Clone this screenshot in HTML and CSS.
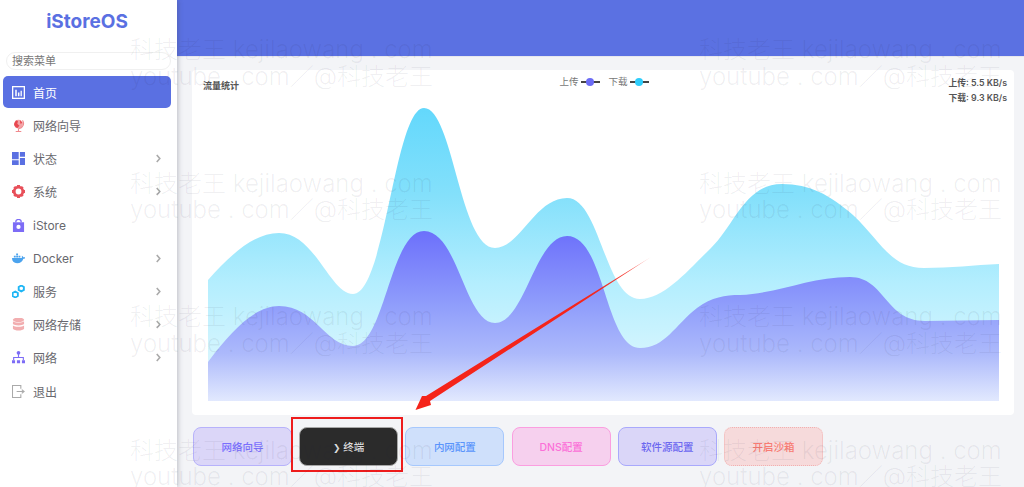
FILE: index.html
```html
<!DOCTYPE html>
<html lang="en">
<head>
    <meta charset="UTF-8" />
    <meta name="viewport" content="width=device-width, initial-scale=1.0" />
    <title>iStoreOS</title>
    <link rel="stylesheet" href="styles.css">
</head>
<body>
    <div class="app">
        <aside class="sidebar">
            <div class="logo">iStoreOS</div>
            <div class="search-box">搜索菜单</div>
            <nav class="menu">
                <a class="menu-item active">
                    <svg class="icon" viewBox="1 1 14 14"><rect x="1.700" y="1.700" width="12.600" height="12.600" fill="none" stroke="#fff" stroke-width="1.400"/><path d="M4.500 5v7h1.600V5zM7.400 8v4H9V8zM10.200 6v6h1.400V6z" fill="#fff"/></svg>
                    <span>首页</span>
                </a>
                <a class="menu-item">
                    <svg class="icon" viewBox="1 1 14 14"><circle cx="8" cy="6.500" r="4.800" fill="#f3a3a6"/><path d="M5 3c2-1 3 .5 2 2s1 2 2 3l-2 2.800c-2-.5-3.800-2.300-3.800-4.300zM9.500 2l2.800 3.200-2.300 1z" fill="#e8474f"/><path d="M12.300 2.500c2.500 3.500.5 8.500-4.300 9V14M5 14.500h6" fill="none" stroke="#f08a8e" stroke-width="1.200"/></svg>
                    <span>网络向导</span>
                </a>
                <a class="menu-item">
                    <svg class="icon" viewBox="1 1 14 14"><path d="M1 1h7.200v7.800H1zM9.500 1H15v5.200H9.500zM1 10h7.200v5H1zM9.500 7.500H15V15H9.500z" fill="#5a70e2"/></svg>
                    <span>状态</span>
                    <svg class="chevron" viewBox="0 0 8 10"><path d="M2 1l3.500 4L2 9" fill="none" stroke="#aaa" stroke-width="1.800"/></svg>
                </a>
                <a class="menu-item">
                    <svg class="icon" viewBox="1 1 14 14"><circle cx="8" cy="8" r="4.600" fill="none" stroke="#e8505a" stroke-width="3"/><path d="M6.500 1h3l.5 2.500h-4zM6.500 15h3l.5-2.500h-4zM1 6.500v3l2.500.5v-4zM15 6.500v3l-2.500.5v-4zM2.500 3.800l2-1.800 1.500 2-2 1.800zM13.500 3.800l-2-1.800-1.500 2 2 1.800zM2.500 12.200l2 1.800 1.500-2-2-1.800zM13.500 12.200l-2 1.800-1.500-2 2-1.800z" fill="#e8505a"/></svg>
                    <span>系统</span>
                    <svg class="chevron" viewBox="0 0 8 10"><path d="M2 1l3.500 4L2 9" fill="none" stroke="#aaa" stroke-width="1.800"/></svg>
                </a>
                <a class="menu-item">
                    <svg class="icon" viewBox="1 1 14 14"><path d="M2 4.500h12V15H2z" fill="#7d6cf6"/><path d="M5 4.500C5 .5 11 .5 11 4.500" fill="none" stroke="#7d6cf6" stroke-width="1.400"/><circle cx="8" cy="9.500" r="2.300" fill="#fff"/></svg>
                    <span>iStore</span>
                </a>
                <a class="menu-item">
                    <svg class="icon" viewBox="1 1 14 14"><path d="M1 7.500h10.500c.3-1.200.1-2 0-2.500 1 .3 1.500 1 1.600 1.700.8-.3 1.600-.2 2.400.3-.5 1-1.300 1.200-2.300 1.200C12.500 11 10 13 6.500 13 3 13 1 11 1 7.500z" fill="#4ba3ee"/><path d="M3 5h2v2H3zM5.500 5h2v2h-2zM8 5h2v2H8zM5.500 2.600h2v2h-2z" fill="#4ba3ee"/></svg>
                    <span>Docker</span>
                    <svg class="chevron" viewBox="0 0 8 10"><path d="M2 1l3.500 4L2 9" fill="none" stroke="#aaa" stroke-width="1.800"/></svg>
                </a>
                <a class="menu-item">
                    <svg class="icon" viewBox="1 1 14 14"><g fill="none" stroke="#1fb6f5" stroke-width="2"><path d="M11 1.500l2.800 1.600v3.200L11 7.900 8.200 6.300V3.100z"/><path d="M4.500 8l2.800 1.600v3.200l-2.800 1.600-2.800-1.600V9.600z"/></g></svg>
                    <span>服务</span>
                    <svg class="chevron" viewBox="0 0 8 10"><path d="M2 1l3.500 4L2 9" fill="none" stroke="#aaa" stroke-width="1.800"/></svg>
                </a>
                <a class="menu-item">
                    <svg class="icon" viewBox="1 1 14 14"><ellipse cx="8" cy="3" rx="6" ry="2.500" fill="#f2aeb0"/><path d="M2 4.500c1.500 2 10.500 2 12 0v3c-1.500 2-10.500 2-12 0zM2 9c1.500 2 10.500 2 12 0v3.500c-1.500 2.500-10.500 2.500-12 0z" fill="#f2aeb0"/></svg>
                    <span>网络存储</span>
                    <svg class="chevron" viewBox="0 0 8 10"><path d="M2 1l3.500 4L2 9" fill="none" stroke="#aaa" stroke-width="1.800"/></svg>
                </a>
                <a class="menu-item">
                    <svg class="icon" viewBox="1 1 14 14"><circle cx="8" cy="3" r="2" fill="#7d6cf6"/><path d="M8 4v4M2.800 11V8h10.400v3" fill="none" stroke="#7d6cf6" stroke-width="1.200"/><path d="M1 11h3.300v3.300H1zM6.300 11h3.400v3.300H6.300zM11.700 11H15v3.300h-3.300z" fill="#7d6cf6"/></svg>
                    <span>网络</span>
                    <svg class="chevron" viewBox="0 0 8 10"><path d="M2 1l3.500 4L2 9" fill="none" stroke="#aaa" stroke-width="1.800"/></svg>
                </a>
                <a class="menu-item">
                    <svg class="icon" viewBox="1 1 14 14"><path d="M10.500 5V1.500h-9v13h9V11" fill="none" stroke="#aaa" stroke-width="1.200"/><path d="M6 8h7M11.500 6l2.500 2-2.500 2" fill="none" stroke="#aaa" stroke-width="1.200"/></svg>
                    <span>退出</span>
                </a>
            </nav>
        </aside>

        <main class="main">
            <header class="topbar"></header>
            <div class="content">
                <section class="chart-card">
                    <div class="chart-head">
                        <div class="chart-title">流量统计</div>
                        <div class="legend">
                            <span>上传</span><i class="legend-mark upload"></i>
                            <span class="legend-gap">下载</span><i class="legend-mark download"></i>
                        </div>
                        <div class="rates">
                            <div>上传: 5.5 KB/s</div>
                            <div>下载: 9.3 KB/s</div>
                        </div>
                    </div>
                    <svg class="chart" viewBox="208 102 791 299">
                        <defs>
                            <linearGradient id="downFill" gradientUnits="userSpaceOnUse" x1="0" y1="108" x2="0" y2="401">
                                <stop offset="0" stop-color="#63d8fc"/>
                                <stop offset="0.3" stop-color="#84e0fb"/>
                                <stop offset="0.6" stop-color="#b4eefe"/>
                                <stop offset="1" stop-color="#e8f9fe"/>
                            </linearGradient>
                            <linearGradient id="upFill" gradientUnits="userSpaceOnUse" x1="0" y1="231" x2="0" y2="401">
                                <stop offset="0" stop-color="#6c70fb"/>
                                <stop offset="0.45" stop-color="#919ffb"/>
                                <stop offset="0.72" stop-color="#acb9fb"/>
                                <stop offset="1" stop-color="#e2e9fe"/>
                            </linearGradient>
                        </defs>
                        <path fill="url(#downFill)" d="M208 280C232 253 255 233 279 233C315 233 330 294 353 294C385 294 395 108 424 108C453 108 460 248 495 248C520 248 535 198 567 198C600 198 605 299 640 299C665 299 690 268 711 248C735 225 745 184 782 184C810 184 830 195 853 215C880 240 890 268 924 268C950 268 975 265 999 264L999 401L208 401Z"/>
                        <path fill="url(#upFill)" d="M208 362C232 330 255 306 279 306C315 306 325 346 353 346C385 346 390 231 424 231C458 231 465 323 495 323C525 323 535 236 567 236C605 236 605 348 640 348C665 348 675 325 697 308C712 297 725 295 740 295C780 293 810 277 850 277C885 277 885 321 925 321C950 321 975 320 999 320L999 401L208 401Z"/>
                    </svg>
                </section>
                <div class="actions">
                    <button class="action action-purple">网络向导</button>
                    <button class="action action-dark"><b>❯</b> 终端</button>
                    <button class="action action-blue">内网配置</button>
                    <button class="action action-pink">DNS配置</button>
                    <button class="action action-indigo">软件源配置</button>
                    <button class="action action-red">开启沙箱</button>
                </div>
            </div>
        </main>
    </div>

    <!-- annotation drawn on top of the screenshot -->
    <div class="mark-box"></div>
    <svg class="mark-arrow" viewBox="0 0 1024 487">
        <defs>
            <linearGradient id="arrowFill" gradientUnits="userSpaceOnUse" x1="651" y1="257" x2="416" y2="410">
                <stop offset="0" stop-color="#f5241a" stop-opacity="0.4"/>
                <stop offset="0.1" stop-color="#f5241a" stop-opacity="0.85"/>
                <stop offset="0.3" stop-color="#f5241a"/>
                <stop offset="1" stop-color="#f5241a"/>
            </linearGradient>
        </defs>
        <path fill="url(#arrowFill)" d="M651 257L430 401L431 405L415.500 410L422 396L426 396Z"/>
    </svg>

    <div class="watermark">
        <div>科技老王 kejilaowang . com<br>youtube . com／@科技老王</div>
        <div>科技老王 kejilaowang . com<br>youtube . com／@科技老王</div>
        <div>科技老王 kejilaowang . com<br>youtube . com／@科技老王</div>
        <div>科技老王 kejilaowang . com<br>youtube . com／@科技老王</div>
        <div>科技老王 kejilaowang . com<br>youtube . com／@科技老王</div>
        <div>科技老王 kejilaowang . com<br>youtube . com／@科技老王</div>
        <div>科技老王 kejilaowang . com<br>youtube . com／@科技老王</div>
        <div>科技老王 kejilaowang . com<br>youtube . com／@科技老王</div>
    </div>
</body>
</html>
```

FILE: styles.css
```css
* {
    box-sizing: border-box;
    margin: 0;
    padding: 0;
    font-family: Inter, 'Noto Sans CJK SC', sans-serif;
}

html, body {
    height: 100%;
    overflow: hidden;
}

body {
    position: relative;
    background: #f3f4f7;
}

.app {
    display: flex;
    height: 487px;
}

/* sidebar */
.sidebar {
    width: 177px;
    flex-shrink: 0;
    background: white;
    box-shadow: 1px 0 5px rgba(60, 60, 80, 0.3);
    padding: 8px 6px 0 3px;
    z-index: 1;
}

.logo {
    height: 27px;
    line-height: 27px;
    text-align: center;
    font-size: 19px;
    font-weight: 700;
    color: #5a70e2;
}

.search-box {
    margin: 17px 0 6px 3px;
    height: 18px;
    line-height: 16px;
    border: 1px solid #f0f0f0;
    border-radius: 9px;
    padding-left: 5px;
    font-size: 11px;
    color: #777;
}

.menu {
    display: flex;
    flex-direction: column;
}

.menu-item {
    display: flex;
    align-items: center;
    height: 33.200px;
    padding: 0 9px;
    border-radius: 5px;
    font-size: 12px;
    color: #68686e;
}

.menu-item.active {
    background: #5a70e2;
    color: white;
    height: 32px;
    margin-bottom: 1px;
}

.icon {
    width: 13px;
    height: 13px;
    margin-right: 8px;
    flex-shrink: 0;
}

.chevron {
    width: 7px;
    height: 9px;
    margin-left: auto;
}

/* main area */
.main {
    flex: 1;
    min-width: 0;
    display: flex;
    flex-direction: column;
}

.topbar {
    height: 57px;
    background: #5b71e2;
    border-bottom: 1px solid #e6e7ee;
}

.content {
    padding: 13px 10px 0 15px;
}

.chart-card {
    height: 345px;
    background: white;
    border-radius: 4px;
    padding: 8px 7px 14px 11px;
}

.chart-head {
    display: grid;
    grid-template-columns: 1fr auto 1fr;
    height: 24px;
    color: #555;
}

.chart-title {
    font-size: 9px;
    font-weight: 600;
    line-height: 14px;
    padding-top: 1px;
}

.legend {
    display: flex;
    align-items: flex-start;
    font-size: 9.500px;
    line-height: 8px;
    color: #777;
    transform: translateX(-1px);
}

.legend-gap {
    margin-left: 9px;
}

.legend-mark {
    position: relative;
    display: block;
    width: 19px;
    height: 2px;
    margin: 3px 0 0 2px;
    background: #444;
}

.legend-mark::after {
    content: '';
    position: absolute;
    left: 5px;
    top: -3px;
    width: 8px;
    height: 8px;
    border-radius: 50%;
}

.upload::after {
    background: #6c6cf5;
}

.download::after {
    background: #2fcdfb;
}

.rates {
    margin-top: -2px;
    text-align: right;
    font-size: 8.800px;
    font-weight: 600;
    line-height: 14.500px;
}

.chart {
    display: block;
    width: 791px;
    height: 299px;
    margin-left: 5px;
}

/* quick actions */
.actions {
    display: flex;
    gap: 7.200px;
    margin-top: 12px;
    padding-left: 1px;
}

.action {
    width: 99px;
    height: 39px;
    border: 1px solid;
    border-radius: 8px;
    font-size: 10.500px;
    font-weight: 500;
}

.action b {
    font-size: 9px;
    font-weight: 700;
    font-family: 'DejaVu Sans', sans-serif;
}

.action-purple {
    background: #dbd6f8;
    border-color: #b7b2fb;
    color: #7a70fd;
}

.action-dark {
    background: #2b2b2b;
    border-color: #a8a8a8;
    color: #dedede;
}

.action-blue {
    background: #cfe0fb;
    border-color: #a6c8fd;
    color: #5a95fb;
}

.action-pink {
    background: #f6d0ee;
    border-color: #fb9ee0;
    color: #fb70d8;
}

.action-indigo {
    background: #dad6f8;
    border-color: #a9a9fc;
    color: #6d68f0;
}

.action-red {
    background: #f6dadb;
    border: 1px dotted #f2b0b0;
    color: #f87c74;
}

/* overlays */
.mark-box {
    position: absolute;
    left: 291px;
    top: 417px;
    width: 112px;
    height: 55px;
    border: 2px solid #ee1c1c;
    z-index: 3;
}

.mark-arrow {
    position: absolute;
    left: 0;
    top: 0;
    width: 1024px;
    height: 487px;
    z-index: 3;
}

.watermark {
    position: absolute;
    left: 130px;
    top: 0;
    height: 487px;
    padding-top: 37px;
    overflow: hidden;
    display: grid;
    grid-template-columns: 569px 320px;
    grid-auto-rows: 133.500px;
    font-size: 24px;
    font-weight: 300;
    line-height: 26.500px;
    white-space: nowrap;
    color: rgba(30, 30, 60, 0.07);
    pointer-events: none;
    z-index: 4;
}
```
